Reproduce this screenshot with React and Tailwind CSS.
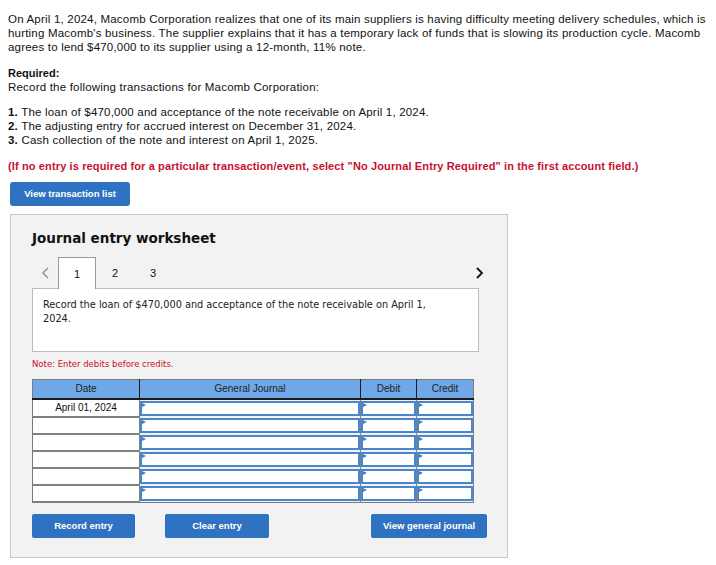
import React from 'react'

const rows = ['April 01, 2024', '', '', '', '', '']

function Flag() {
  return <span className="absolute left-0 top-0 w-0 h-0 border-t-[2px] border-b-[2px] border-l-[4px] border-t-transparent border-b-transparent border-l-[#3d7fd0]" />
}

function InputCell() {
  return (
    <td className="p-0 border-x border-[#808080]">
      <div className="relative h-[15px] my-[1px] bg-white border-2 border-[#4a86cf]">
        <Flag />
      </div>
    </td>
  )
}

export default function App() {
  return (
    <div className="min-h-[565px] bg-white text-[#111] font-['Liberation_Sans',Arial,sans-serif] text-[11.5px] tracking-[0.2px] leading-[14px] px-2 pt-[12px]">
      <p className="whitespace-nowrap">
        On April 1, 2024, Macomb Corporation realizes that one of its main suppliers is having difficulty meeting delivery schedules, which is<br />
        hurting Macomb's business. The supplier explains that it has a temporary lack of funds that is slowing its production cycle. Macomb<br />
        agrees to lend $470,000 to its supplier using a 12-month, 11% note.
      </p>

      <p className="mt-[12px] font-bold text-[11px] tracking-normal">Required:</p>
      <p>Record the following transactions for Macomb Corporation:</p>

      <ol className="mt-[11px]">
        <li><b>1.</b> The loan of $470,000 and acceptance of the note receivable on April 1, 2024.</li>
        <li><b>2.</b> The adjusting entry for accrued interest on December 31, 2024.</li>
        <li><b>3.</b> Cash collection of the note and interest on April 1, 2025.</li>
      </ol>

      <p className="mt-[12px] font-bold text-[11px] tracking-[0.13px] text-[#c8102e] whitespace-nowrap">
        (If no entry is required for a particular transaction/event, select "No Journal Entry Required" in the first account field.)
      </p>

      <button className="mt-[9px] ml-[2px] w-[120px] h-[24px] rounded-[3px] bg-[#2f72c1] text-white text-[9.5px] tracking-normal font-bold">
        View transaction list
      </button>

      <div className="mt-[8px] ml-[2px] w-[498px] h-[344px] bg-[#f2f2f2] border border-[#c8c8c8] pl-[21px] pt-[13px] tracking-normal text-[11px]">
        <h2 className="font-['DejaVu_Sans',Verdana,sans-serif] font-bold text-[13.5px] leading-[20px] text-[#111]">
          Journal entry worksheet
        </h2>

        <div className="mt-[8px] flex items-end h-[32px] w-[446px] relative">
          <span className="w-[26px] h-[30px] flex items-center justify-center text-[#999]">
            <svg width="8" height="12" viewBox="0 0 8 12"><path d="M7 1 L2 6 L7 11" fill="none" stroke="#999" strokeWidth="1.6" /></svg>
          </span>
          <div className="w-[38px] h-[32px] bg-white border border-b-0 border-[#999] flex items-center justify-center relative top-[1px] z-10">1</div>
          <div className="w-[38px] h-[30px] flex items-center justify-center">2</div>
          <div className="w-[38px] h-[30px] flex items-center justify-center">3</div>
          <span className="ml-auto mr-[-6px] h-[30px] flex items-center">
            <svg width="8" height="12" viewBox="0 0 8 12"><path d="M1 1 L6 6 L1 11" fill="none" stroke="#111" strokeWidth="1.8" /></svg>
          </span>
        </div>

        <div className="w-[447px] h-[64px] bg-white border border-[#bdbdbd] px-[10px] pt-[9px] font-['DejaVu_Sans',Verdana,sans-serif] text-[9.75px] leading-[14px] text-[#222] whitespace-nowrap">
          Record the loan of $470,000 and acceptance of the note receivable on April 1,<br />2024.
        </div>

        <p className="mt-[6px] font-['DejaVu_Sans',Verdana,sans-serif] text-[8.5px] leading-[12px] text-[#c8102e]">
          Note: Enter debits before credits.
        </p>

        <table className="mt-[9px] w-[442px] border-collapse border border-[#7a7a7a] table-fixed text-[10px]">
          <thead>
            <tr className="h-[19px] bg-[#6fa8e9] text-[#222]">
              <th className="w-[107px] font-normal border-r border-b-2 border-[#1a1a1a]">Date</th>
              <th className="w-[221px] font-normal border-r border-b-2 border-[#1a1a1a]">General Journal</th>
              <th className="w-[56px] font-normal border-r border-b-2 border-[#1a1a1a]">Debit</th>
              <th className="w-[57px] font-normal border-b-2 border-[#1a1a1a]">Credit</th>
            </tr>
          </thead>
          <tbody>
            {rows.map((d, i) => (
              <tr key={i} className="h-[17px]">
                <td className="bg-white text-center border-b-2 border-[#808080] p-0 leading-[15px]">{d}</td>
                <InputCell />
                <InputCell />
                <InputCell />
              </tr>
            ))}
          </tbody>
        </table>

        <div className="mt-[11px] flex w-[455px] text-white font-bold text-[9.5px]">
          <button className="w-[103px] h-[24px] rounded-[2px] bg-[#2f72c1]">Record entry</button>
          <button className="ml-[30px] w-[104px] h-[24px] rounded-[2px] bg-[#2f72c1]">Clear entry</button>
          <button className="ml-auto w-[116px] h-[24px] rounded-[2px] bg-[#2f72c1]">View general journal</button>
        </div>
      </div>
    </div>
  )
}
